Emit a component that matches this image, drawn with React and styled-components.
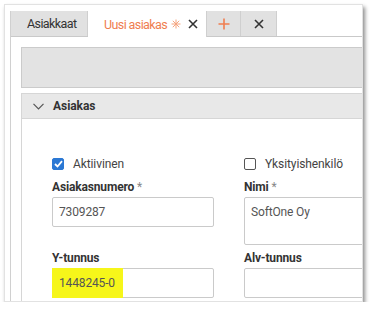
import styled, { createGlobalStyle } from 'styled-components';

const FONT = `"Roboto", "Liberation Sans", sans-serif`;

const Global = createGlobalStyle`
    body {
        margin: 0;
        background: #fff;
        font-family: ${FONT};
    }
`;

const Frame = styled.div`
    box-sizing: border-box;
    margin: 4px 0 0 4px;
    width: 359px;
    height: 298px;
    padding: 6px 0 0 5px;
    border: 1px solid #e2e2e2;
    background: #fff;
    box-shadow: 2px 3px 4px rgba(0, 0, 0, 0.45);
    overflow: hidden;
`;

const Panel = styled.div`
    width: 420px;
    height: 100%;
    border-left: 1px solid #d0d0d0;
`;

const TabBar = styled.div`
    display: flex;
    height: 25px;
    border-bottom: 1px solid #c9c9c9;
`;

const Tab = styled.div`
    box-sizing: border-box;
    display: flex;
    align-items: center;
    justify-content: ${p => (p.$center ? 'center' : 'flex-start')};
    width: ${p => p.$w}px;
    height: ${p => (p.$active ? 26 : 25)}px;
    padding-left: ${p => (p.$center ? 0 : 16)}px;
    background: ${p => (p.$active ? '#fff' : '#e1e1e1')};
    border-right: 1px solid #cfcfcf;
    color: ${p => (p.$active ? '#ef7d4f' : '#333')};
    font-size: 12.5px;
    letter-spacing: -0.6px;
    white-space: nowrap;
`;

const TabIcon = styled.span`
    display: flex;
    margin-left: ${p => p.$ml || 0}px;
`;

const Body = styled.div`
    padding: 10px 0 0 10px;
`;

const Toolbar = styled.div`
    box-sizing: border-box;
    height: 41px;
    background: #e3e3e3;
    border: 1px solid #cbcbcb;
`;

const SectionHead = styled.div`
    box-sizing: border-box;
    display: flex;
    align-items: center;
    gap: 9px;
    margin-top: 5px;
    height: 26px;
    padding-left: 11px;
    background: #e8e8e8;
    border: 1px solid #d6d6d6;
    color: #333;
    font-size: 12px;
    font-weight: bold;
    letter-spacing: -0.05px;
`;

const SectionBody = styled.div`
    height: 200px;
    padding: 39px 0 0 30px;
    border-left: 1px solid #d6d6d6;
`;

const Grid = styled.div`
    display: grid;
    grid-template-columns: 162px 162px;
    column-gap: 30px;
    row-gap: ${p => p.$gap || 0}px;
`;

const Check = styled.label`
    display: flex;
    align-items: center;
    gap: 9px;
    height: 12px;
    color: #444;
    font-size: 12px;
    letter-spacing: -0.1px;
`;

const Box = styled.span`
    box-sizing: border-box;
    display: flex;
    align-items: center;
    justify-content: center;
    width: 12px;
    height: 12px;
    border-radius: 2px;
    border: 1px solid ${p => (p.$on ? '#2b78d4' : '#555')};
    background: ${p => (p.$on ? '#2b78d4' : '#fff')};
`;

const Fields = styled(Grid)`
    margin-top: 10px;
`;

const Label = styled.div`
    height: 14px;
    line-height: 14px;
    margin-bottom: 3px;
    color: #333;
    font-size: 12px;
    font-weight: bold;
    letter-spacing: -0.15px;

    span {
        color: #888;
        font-weight: normal;
    }
`;

const Input = styled.div`
    position: relative;
    box-sizing: border-box;
    height: ${p => p.$h || 30}px;
    padding: 7px 0 0 6px;
    border: 1px solid #cacaca;
    border-radius: 2px;
    color: #555;
    font-size: 12px;
    letter-spacing: -0.15px;
    line-height: 14px;
`;

const Marker = styled.span`
    position: absolute;
    left: -1px;
    top: -1px;
    bottom: -1px;
    width: 71px;
    background: #f6f61a;
`;

const Value = styled.span`
    position: relative;
`;

const Cross = ({ color = '#333', size = 10 }) => (
    <svg width={size} height={size} viewBox="0 0 10 10">
        <path d="M1 1 L9 9 M9 1 L1 9" stroke={color} strokeWidth="1.6" />
    </svg>
);

const Plus = () => (
    <svg width="12" height="12" viewBox="0 0 12 12">
        <path d="M6 0.5 V11.5 M0.5 6 H11.5" stroke="#f07e50" strokeWidth="1.6" />
    </svg>
);

const Star = () => (
    <svg width="10" height="10" viewBox="0 0 10 10">
        <path d="M5 0.5 V9.5 M0.5 5 H9.5 M1.8 1.8 L8.2 8.2 M8.2 1.8 L1.8 8.2" stroke="#f5a47f" strokeWidth="1" />
    </svg>
);

const Chevron = () => (
    <svg width="11" height="7" viewBox="0 0 11 7">
        <path d="M0.5 0.8 L5.5 5.8 L10.5 0.8" fill="none" stroke="#555" strokeWidth="1.2" />
    </svg>
);

const Tick = () => (
    <svg width="9" height="8" viewBox="0 0 9 8">
        <path d="M1 4 L3.5 6.5 L8 1.2" fill="none" stroke="#fff" strokeWidth="1.8" />
    </svg>
);

export default function App() {
    return (
        <>
            <Global />
            <Frame>
                <Panel>
                    <TabBar>
                        <Tab $w={77}>Asiakkaat</Tab>
                        <Tab $w={119} $active>
                            <span>Uusi asiakas</span>
                            <TabIcon $ml={4}><Star /></TabIcon>
                            <TabIcon $ml={7}><Cross /></TabIcon>
                        </Tab>
                        <Tab $w={34} $center><Plus /></Tab>
                        <Tab $w={36} $center><Cross /></Tab>
                    </TabBar>
                    <Body>
                        <Toolbar />
                        <SectionHead>
                            <Chevron />
                            Asiakas
                        </SectionHead>
                        <SectionBody>
                            <Grid>
                                <Check><Box $on><Tick /></Box>Aktiivinen</Check>
                                <Check><Box />Yksityishenkilö</Check>
                            </Grid>
                            <Fields $gap={6}>
                                <div>
                                    <Label>Asiakasnumero <span>*</span></Label>
                                    <Input>7309287</Input>
                                </div>
                                <div>
                                    <Label>Nimi <span>*</span></Label>
                                    <Input $h={48}>SoftOne Oy</Input>
                                </div>
                                <div>
                                    <Label>Y-tunnus</Label>
                                    <Input>
                                        <Marker />
                                        <Value>1448245-0</Value>
                                    </Input>
                                </div>
                                <div>
                                    <Label>Alv-tunnus</Label>
                                    <Input />
                                </div>
                            </Fields>
                        </SectionBody>
                    </Body>
                </Panel>
            </Frame>
        </>
    );
}
